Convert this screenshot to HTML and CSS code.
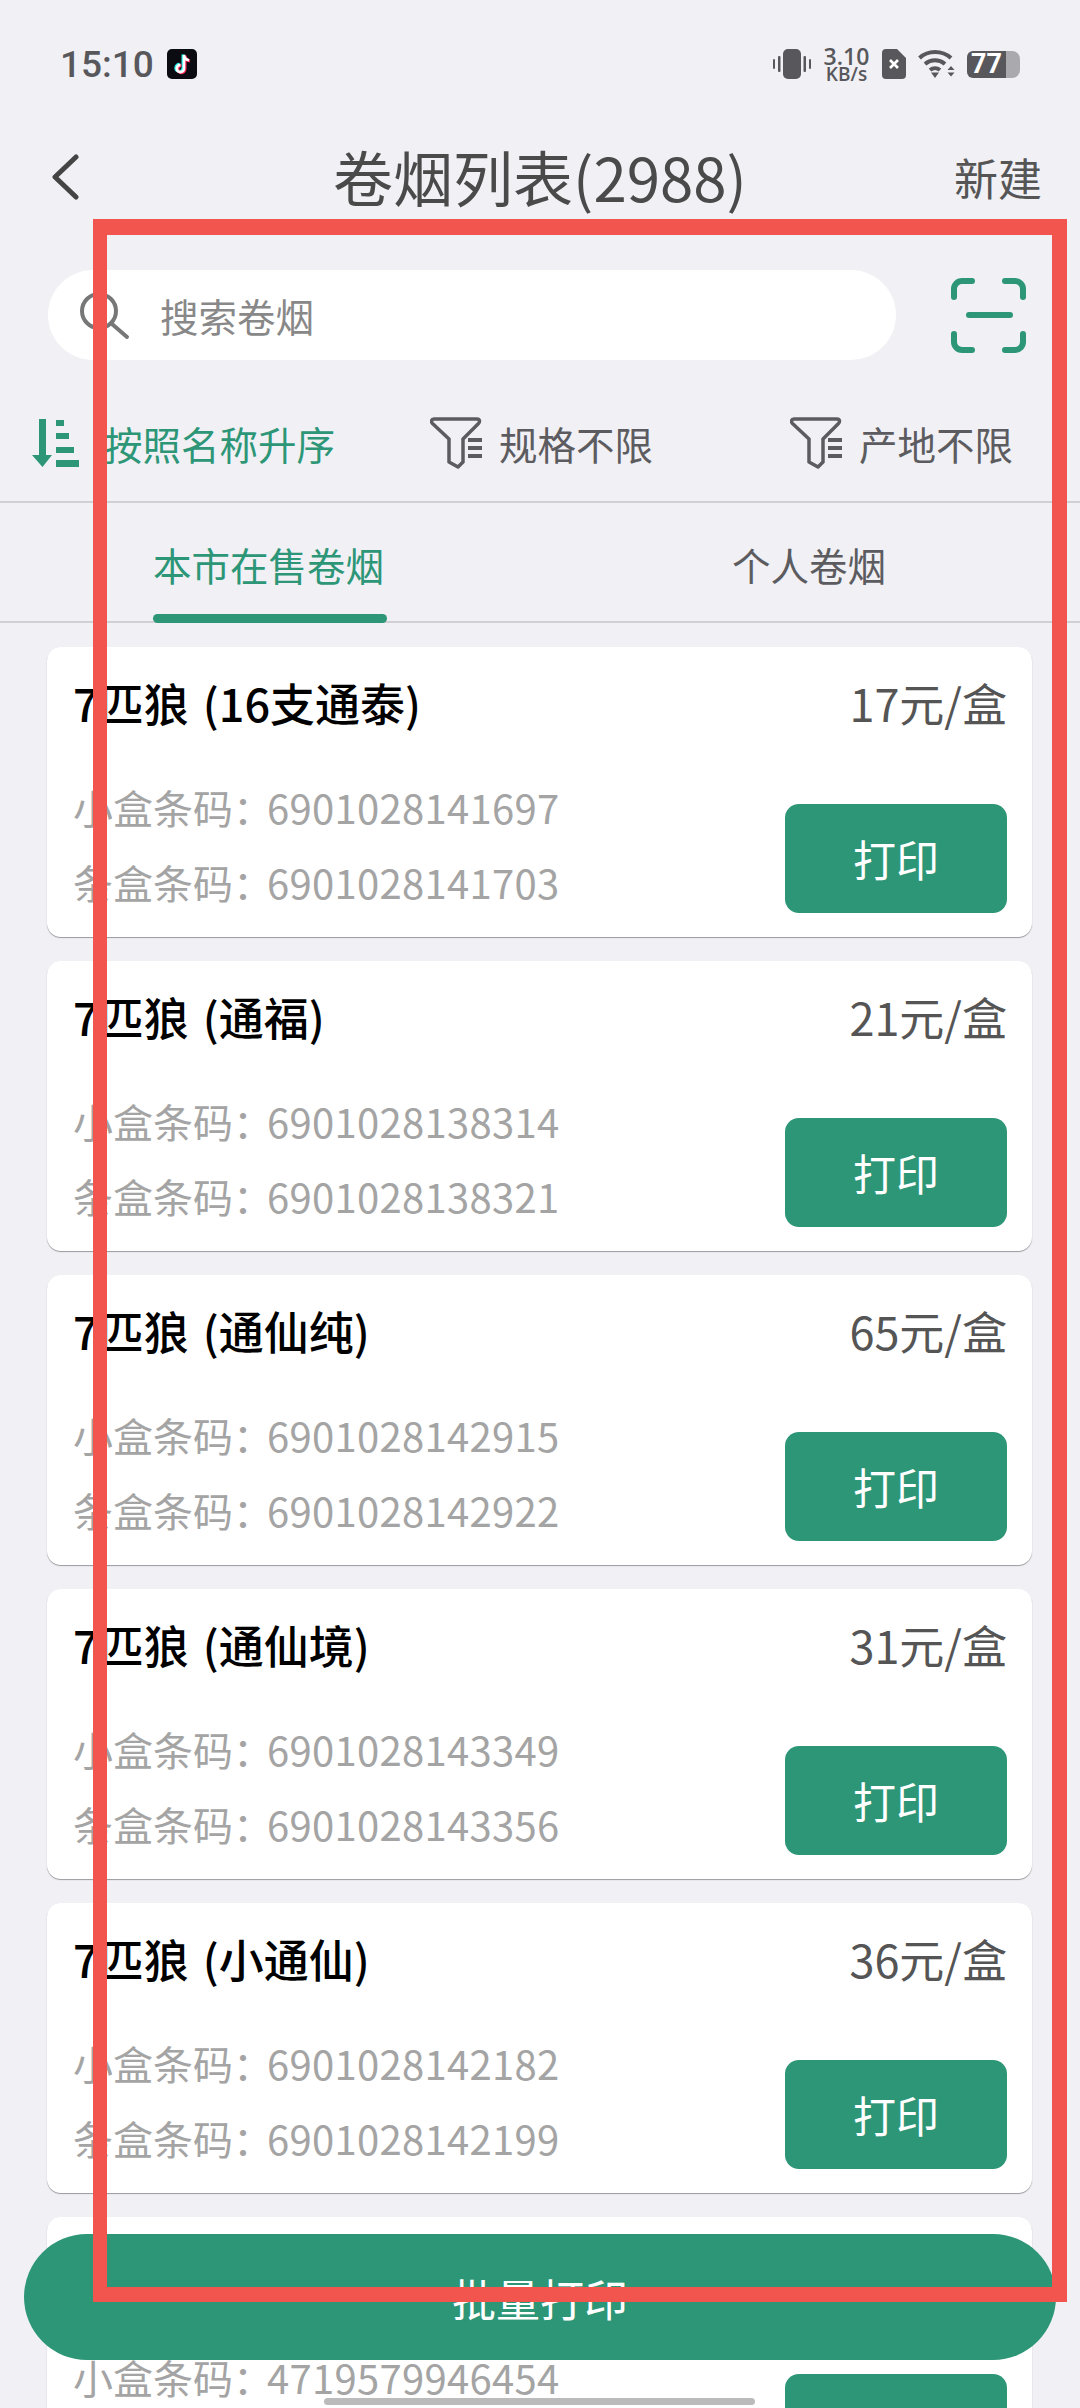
FILE: index.html
```html
<!DOCTYPE html>
<html lang="zh-CN">
<head>
  <meta charset="UTF-8" />
  <meta name="viewport" content="width=device-width, initial-scale=1.0"/>
  <title>卷烟列表</title>
  <link rel="stylesheet" href="styles.css">
</head>
<body>
  <div class="page">
    <div class="status-bar">
      <div class="status-left">
        <span class="time">15:10</span>
        <svg class="tiktok" width="30" height="30" viewBox="0 0 30 30">
          <rect width="30" height="30" rx="5" fill="#0b0b12"/>
          <path d="M17 6v13.5a3.6 3.6 0 1 1-3.6-3.6M17 6c.4 3 2.4 5 5 5.3" fill="none" stroke="#25f4ee" stroke-width="3" transform="translate(-1 -.6)"/>
          <path d="M17 6v13.5a3.6 3.6 0 1 1-3.6-3.6M17 6c.4 3 2.4 5 5 5.3" fill="none" stroke="#fe2c55" stroke-width="3" transform="translate(1 .6)"/>
          <path d="M17 6v13.5a3.6 3.6 0 1 1-3.6-3.6M17 6c.4 3 2.4 5 5 5.3" fill="none" stroke="#fff" stroke-width="2.6"/>
        </svg>
      </div>
      <div class="status-right">
        <svg width="38" height="30" viewBox="0 0 38 30" fill="#58585c">
          <rect x="10" y="0" width="18" height="30" rx="5"/>
          <rect x="5" y="7" width="2.5" height="16" rx="1"/><rect x="0" y="10" width="2" height="10" rx="1"/>
          <rect x="30.5" y="7" width="2.5" height="16" rx="1"/><rect x="36" y="10" width="2" height="10" rx="1"/>
        </svg>
        <div class="speed"><span>3.10</span><span class="speed-unit">KB/s</span></div>
        <svg width="24" height="30" viewBox="0 0 24 30">
          <path d="M4 0h11l9 9v17a4 4 0 0 1-4 4H4a4 4 0 0 1-4-4V4a4 4 0 0 1 4-4z" fill="#58585c"/>
          <path d="M8 11l8 8M16 11l-8 8" stroke="#fff" stroke-width="2.6"/>
        </svg>
        <svg width="37" height="28" viewBox="0 0 37 28" fill="none" stroke="#58585c" stroke-width="4">
          <path d="M1.5 8C10 0 24 0 33 8"/>
          <path d="M7 14c6-5 14-5 20 0"/>
          <path d="M12 20c3-2.5 7-2.5 10 0"/>
          <path d="M13 22.5h8L17 28z" fill="#58585c" stroke="none"/>
          <path d="M29.5 20l3.500-4 3.500 4zM29.5 22.5l3.500 4 3.500-4z" fill="#58585c" stroke="none"/>
        </svg>
        <div class="battery">
          <div class="battery-fill">77</div>
          <div class="battery-cap"></div>
        </div>
      </div>
    </div>

    <div class="header">
      <svg class="back" width="28" height="50" viewBox="0 0 28 50" fill="none" stroke="#444" stroke-width="5" stroke-linecap="round" stroke-linejoin="round">
        <path d="M25 5L4 25l21 20"/>
      </svg>
      <div class="title">卷烟列表(2988)</div>
      <div class="new">新建</div>
    </div>

    <div class="search-row">
      <div class="search">
        <svg width="52" height="52" viewBox="0 0 52 52" fill="none" stroke="#777" stroke-width="4" stroke-linecap="round">
          <circle cx="21" cy="22" r="17"/>
          <path d="M34 35l15 13"/>
        </svg>
        <span>搜索卷烟</span>
      </div>
      <svg class="scan" width="75" height="75" viewBox="0 0 75 75" fill="none" stroke="#2d9677" stroke-width="6" stroke-linecap="round">
        <path d="M3 19V11a8 8 0 0 1 8-8h10M54 3h10a8 8 0 0 1 8 8v8M3 56v8a8 8 0 0 0 8 8h10M72 56v8a8 8 0 0 1-8 8H54"/>
        <path d="M18 37h41"/>
      </svg>
    </div>

    <div class="filters">
      <div class="filter active">
        <svg width="47" height="48" viewBox="0 0 47 48" fill="#2d9677">
          <path d="M7 0h7v36h6L10.5 48 0 36h7z"/>
          <rect x="24" y="1" width="8" height="6"/><rect x="24" y="14" width="13" height="6"/>
          <rect x="24" y="28" width="18" height="6"/><rect x="24" y="41" width="23" height="7"/>
        </svg>
        <span>按照名称升序</span>
      </div>
      <div class="filter">
        <svg width="52" height="52" viewBox="0 0 52 52" fill="none" stroke="#5c5c60" stroke-width="3.5" stroke-linejoin="round">
          <path d="M4 2h43c3 0 3 3 1.5 4.5L33 22v23l-5 5-9-5V22L2.5 6.5C1 5 1 2 4 2z"/>
          <path d="M38 23h14M38 31h14M38 39h14" stroke-width="4"/>
        </svg>
        <span>规格不限</span>
      </div>
      <div class="filter">
        <svg width="52" height="52" viewBox="0 0 52 52" fill="none" stroke="#5c5c60" stroke-width="3.5" stroke-linejoin="round">
          <path d="M4 2h43c3 0 3 3 1.5 4.5L33 22v23l-5 5-9-5V22L2.5 6.5C1 5 1 2 4 2z"/>
          <path d="M38 23h14M38 31h14M38 39h14" stroke-width="4"/>
        </svg>
        <span>产地不限</span>
      </div>
    </div>

    <div class="tabs">
      <div class="tab active">本市在售卷烟</div>
      <div class="tab">个人卷烟</div>
    </div>

    <div class="list">
      <div class="card">
        <div class="card-top"><span class="name">7匹狼 (16支通泰)</span><span class="price">17元/盒</span></div>
        <div class="card-body">
          <div class="codes"><div>小盒条码：<span class="num">6901028141697</span></div><div>条盒条码：<span class="num">6901028141703</span></div></div>
          <div class="print">打印</div>
        </div>
      </div>
      <div class="card">
        <div class="card-top"><span class="name">7匹狼 (通福)</span><span class="price">21元/盒</span></div>
        <div class="card-body">
          <div class="codes"><div>小盒条码：<span class="num">6901028138314</span></div><div>条盒条码：<span class="num">6901028138321</span></div></div>
          <div class="print">打印</div>
        </div>
      </div>
      <div class="card">
        <div class="card-top"><span class="name">7匹狼 (通仙纯)</span><span class="price">65元/盒</span></div>
        <div class="card-body">
          <div class="codes"><div>小盒条码：<span class="num">6901028142915</span></div><div>条盒条码：<span class="num">6901028142922</span></div></div>
          <div class="print">打印</div>
        </div>
      </div>
      <div class="card">
        <div class="card-top"><span class="name">7匹狼 (通仙境)</span><span class="price">31元/盒</span></div>
        <div class="card-body">
          <div class="codes"><div>小盒条码：<span class="num">6901028143349</span></div><div>条盒条码：<span class="num">6901028143356</span></div></div>
          <div class="print">打印</div>
        </div>
      </div>
      <div class="card">
        <div class="card-top"><span class="name">7匹狼 (小通仙)</span><span class="price">36元/盒</span></div>
        <div class="card-body">
          <div class="codes"><div>小盒条码：<span class="num">6901028142182</span></div><div>条盒条码：<span class="num">6901028142199</span></div></div>
          <div class="print">打印</div>
        </div>
      </div>
      <div class="card">
        <div class="card-top"></div>
        <div class="card-body">
          <div class="codes"><div>小盒条码：<span class="num">4719579946454</span></div></div>
          <div class="print"></div>
        </div>
      </div>
    </div>

    <div class="batch">批量打印</div>
    <div class="home-bar"></div>
    <div class="frame"></div>
  </div>
</body>
</html>
```

FILE: styles.css
```css
* {
  box-sizing: border-box;
}

body {
  margin: 0;
  background: #f0f0f5;
  font-family: "Noto Sans CJK SC", "Noto Sans", sans-serif;
}

.page {
  position: relative;
  width: 1080px;
  height: 2408px;
  overflow: hidden;
}

.status-bar {
  height: 128px;
  padding: 0 60px;
  display: flex;
  justify-content: space-between;
  align-items: center;
}

.status-left {
  display: flex;
  align-items: center;
  gap: 13px;
  color: #58585c;
}

.time {
  font-family: "Roboto", sans-serif;
  font-size: 37px;
  font-weight: 500;
}

.status-right {
  display: flex;
  align-items: center;
  gap: 12px;
}

.speed {
  width: 47px;
  display: flex;
  flex-direction: column;
  align-items: center;
  font-family: "Open Sans", sans-serif;
  font-size: 23px;
  font-weight: 600;
  line-height: 20px;
  color: #58585c;
}

.speed-unit {
  font-size: 19px;
  line-height: 16px;
  white-space: nowrap;
}

.battery {
  display: flex;
  align-items: center;
  width: 53px;
  height: 27px;
}

.battery-fill {
  width: 39px;
  height: 27px;
  background: #58585c;
  border-radius: 6px 0 0 6px;
  color: #fff;
  font-family: "Roboto", sans-serif;
  font-size: 27px;
  font-weight: 700;
  line-height: 27px;
  text-align: center;
}

.battery-cap {
  width: 14px;
  height: 27px;
  background: #aaaaae;
  border-radius: 0 8px 8px 0;
}

.header {
  height: 98px;
  position: relative;
  display: flex;
  justify-content: center;
  align-items: center;
}

.back {
  position: absolute;
  left: 51px;
  top: 24px;
}

.title {
  font-size: 60px;
  color: #4a4a4a;
  line-height: 96px;
  margin-top: -3px;
}

.new {
  position: absolute;
  right: 38px;
  top: 21px;
  font-size: 44px;
  line-height: 56px;
  color: #555;
}

.search-row {
  margin-top: 44px;
  padding: 0 54px 0 48px;
  display: flex;
  justify-content: space-between;
  align-items: center;
}

.search {
  width: 848px;
  height: 90px;
  padding-left: 30px;
  background: #fff;
  border-radius: 45px;
  display: flex;
  align-items: center;
  gap: 30px;
  color: #888;
  font-size: 38.5px;
}

.filters {
  height: 143px;
  padding: 24px 0 0 32px;
  border-bottom: 2px solid #cfcfd4;
  display: grid;
  grid-template-columns: 398px 360px 1fr;
  align-items: center;
}

.filter {
  display: flex;
  align-items: center;
  gap: 17px;
  font-size: 38.5px;
  color: #5c5c60;
}

.filter.active {
  color: #2d9677;
  gap: 25px;
  white-space: nowrap;
}

.tabs {
  height: 120px;
  border-bottom: 2px solid #cfcfd4;
  display: flex;
}

.tab {
  font-size: 38.5px;
  line-height: 122px;
  color: #5c5c60;
  white-space: nowrap;
}

.tab.active {
  position: relative;
  width: 234px;
  margin: 0 345px 0 153px;
  color: #2d9677;
}

.tab.active::after {
  content: "";
  position: absolute;
  left: 0;
  right: 0;
  bottom: -2px;
  height: 9px;
  background: #2d9677;
  border-radius: 5px;
}

.list {
  padding: 24px 48px 0 47px;
  display: flex;
  flex-direction: column;
  gap: 24px;
}

.card {
  height: 290px;
  padding: 0 25px 0 26px;
  background: #fff;
  border-radius: 14px;
  box-shadow: 0 1px 1px #9a9a9e;
}

.card-top {
  height: 110px;
  display: flex;
  justify-content: space-between;
  align-items: center;
}

.name {
  font-size: 45px;
  font-weight: 500;
  color: #000;
  word-spacing: 4px;
}

.price {
  font-size: 45px;
  color: #555;
}

.card-body {
  display: flex;
  justify-content: space-between;
  margin-top: 47px;
}

.codes {
  font-size: 40px;
  line-height: 75px;
  color: #a4a4a4;
  margin-top: -34px;
}

.num {
  margin-left: -6px;
  letter-spacing: .3px;
}

.print {
  width: 222px;
  height: 109px;
  background: #2d9677;
  border-radius: 14px;
  color: #fff;
  font-size: 43px;
  line-height: 109px;
  text-align: center;
}

.batch {
  position: absolute;
  left: 24px;
  top: 2234px;
  width: 1032px;
  height: 126px;
  background: #2d9677;
  border-radius: 63px;
  color: #fff;
  font-size: 44px;
  line-height: 128px;
  text-align: center;
}

.home-bar {
  position: absolute;
  left: 324px;
  top: 2398px;
  width: 431px;
  height: 7px;
  background: #bbb;
  border-radius: 4px;
}

.frame {
  position: absolute;
  left: 93px;
  top: 219px;
  width: 974px;
  height: 2083px;
  border: solid #f2544e;
  border-width: 16px 15px 15px 14px;
}
```
